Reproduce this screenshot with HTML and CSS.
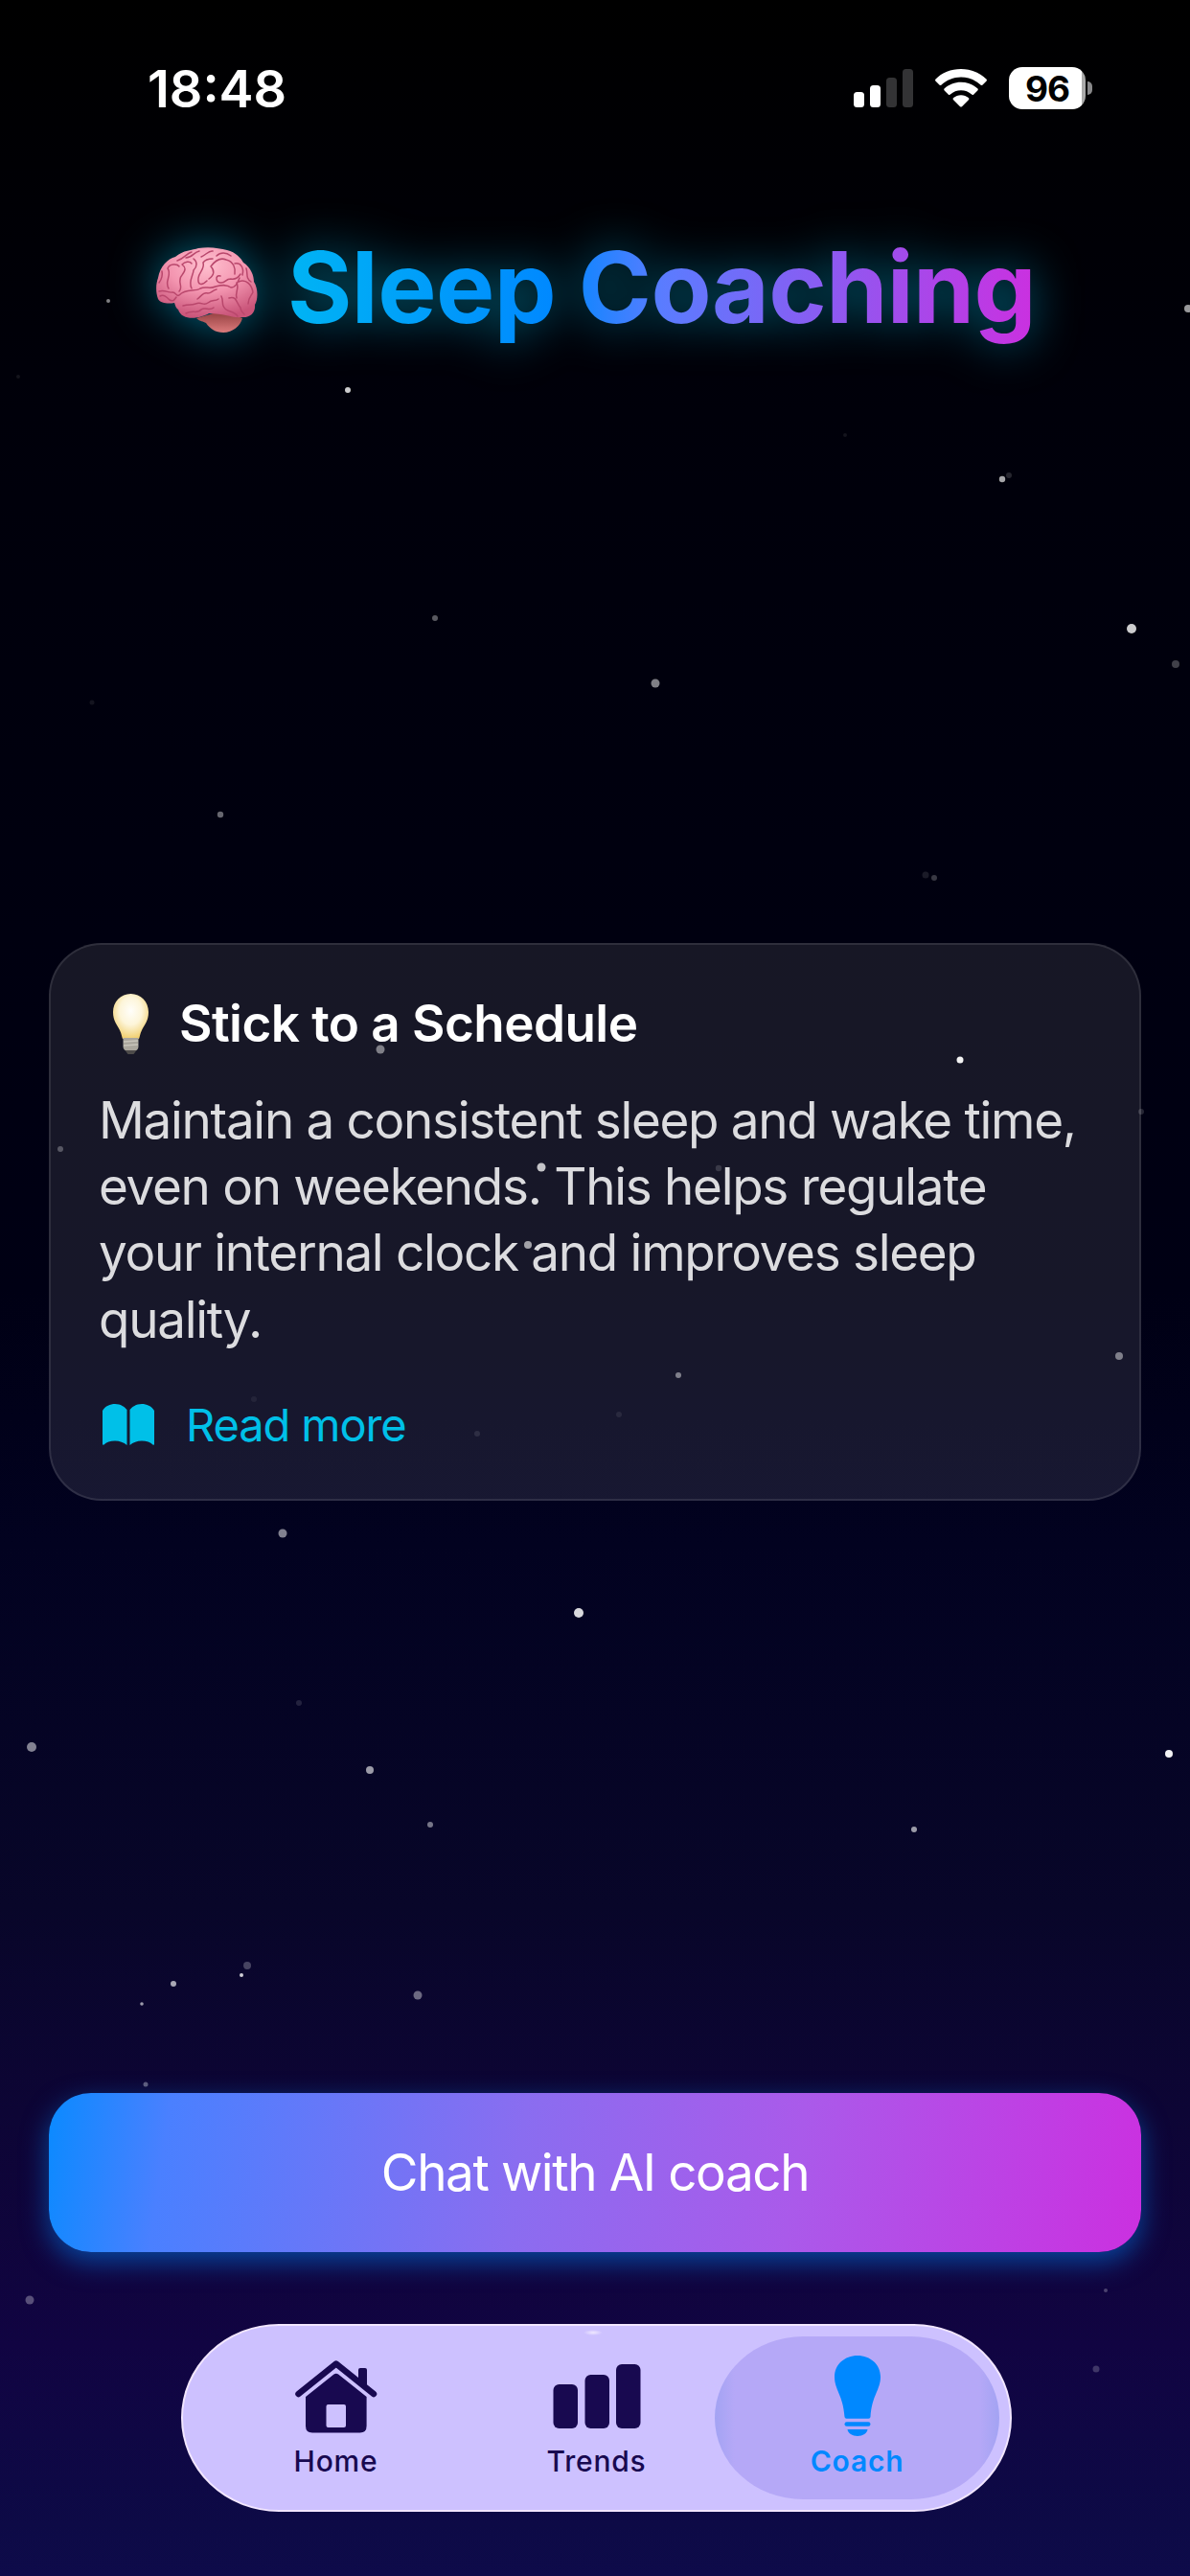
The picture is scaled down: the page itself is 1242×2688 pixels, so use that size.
FILE: index.html
```
<!DOCTYPE html>
<html lang="en">
<head>
    <meta charset="UTF-8">
    <title>Sleep Coaching</title>
    <link rel="stylesheet" href="styles.css">
</head>
<body>
    <div class="screen">
        <svg class="stars" viewBox="0 0 1242 2688" fill="#fff">
            <circle cx="113" cy="314" r="2" opacity=".5"/>
            <circle cx="1240" cy="322" r="4" opacity=".6"/>
            <circle cx="363" cy="407" r="3" opacity=".8"/>
            <circle cx="19" cy="393" r="2" opacity=".08"/>
            <circle cx="1046" cy="500" r="3.2" opacity=".65"/>
            <circle cx="1053" cy="496" r="3" opacity=".15"/>
            <circle cx="882" cy="454" r="2" opacity=".08"/>
            <circle cx="454" cy="645" r="3" opacity=".35"/>
            <circle cx="1181" cy="656" r="5" opacity=".8"/>
            <circle cx="684" cy="713" r="4.5" opacity=".5"/>
            <circle cx="1227" cy="693" r="4" opacity=".25"/>
            <circle cx="96" cy="733" r="2.5" opacity=".08"/>
            <circle cx="230" cy="850" r="3.2" opacity=".4"/>
            <circle cx="966" cy="913" r="3.5" opacity=".1"/>
            <circle cx="975" cy="916" r="3" opacity=".22"/>
            <circle cx="397" cy="1095" r="4.5" opacity=".45"/>
            <circle cx="63" cy="1199" r="3" opacity=".28"/>
            <circle cx="565" cy="1218" r="4.5" opacity=".75"/>
            <circle cx="551" cy="1299" r="4" opacity=".6"/>
            <circle cx="1002" cy="1106" r="3.5" opacity=".95"/>
            <circle cx="1191" cy="1160" r="3" opacity=".15"/>
            <circle cx="750" cy="1219" r="3.2" opacity=".15"/>
            <circle cx="1168" cy="1415" r="4" opacity=".45"/>
            <circle cx="708" cy="1435" r="3" opacity=".45"/>
            <circle cx="265" cy="1460" r="3" opacity=".06"/>
            <circle cx="646" cy="1476" r="3" opacity=".08"/>
            <circle cx="498" cy="1496" r="3" opacity=".1"/>
            <circle cx="295" cy="1600" r="4.5" opacity=".5"/>
            <circle cx="604" cy="1683" r="5" opacity=".85"/>
            <circle cx="312" cy="1777" r="3" opacity=".12"/>
            <circle cx="33" cy="1823" r="5" opacity=".5"/>
            <circle cx="386" cy="1847" r="4" opacity=".6"/>
            <circle cx="1220" cy="1830" r="4" opacity=".95"/>
            <circle cx="449" cy="1904" r="3" opacity=".45"/>
            <circle cx="954" cy="1909" r="3" opacity=".6"/>
            <circle cx="258" cy="2051" r="4" opacity=".25"/>
            <circle cx="252" cy="2061" r="2" opacity=".8"/>
            <circle cx="181" cy="2070" r="3" opacity=".65"/>
            <circle cx="148" cy="2091" r="1.8" opacity=".6"/>
            <circle cx="436" cy="2082" r="4.5" opacity=".4"/>
            <circle cx="152" cy="2175" r="2.5" opacity=".35"/>
            <circle cx="31" cy="2400" r="4.5" opacity=".3"/>
            <circle cx="1154" cy="2390" r="2" opacity=".25"/>
            <circle cx="1144" cy="2472" r="3.5" opacity=".2"/>
        </svg>

        <header class="status-bar">
            <span class="time">18:48</span>
            <div class="status-icons">
                <svg class="signal" viewBox="0 0 62 40" width="62" height="40">
                    <rect x="0" y="24" width="11" height="16" rx="3.5" fill="#fff"/>
                    <rect x="17" y="17" width="11" height="23" rx="3.5" fill="#fff"/>
                    <rect x="34" y="9" width="11" height="31" rx="3.5" fill="#333335"/>
                    <rect x="51" y="0" width="11" height="40" rx="3.5" fill="#333335"/>
                </svg>
                <svg class="wifi" viewBox="0 0 54 40" width="54" height="40" fill="#fff">
                    <path d="M27 0C16.500 0 7 4 .6 10.500c-.7.800-.7 1.500 0 2.200l3.800 3.800c.7.700 1.500.7 2.200 0C12 11.500 19 8.500 27 8.500s15 3 20.400 8c.7.700 1.500.7 2.200 0l3.800-3.800c.7-.7.7-1.400 0-2.200C47 4 37.500 0 27 0z"/>
                    <path d="M27 13.700c-6.600 0-12.600 2.500-17.200 6.500-.8.700-.8 1.500-.1 2.200l4 4c.7.700 1.400.7 2.200.1 3-2.700 6.900-4.200 11.100-4.200s8.100 1.500 11.100 4.200c.8.600 1.500.6 2.200-.1l4-4c.7-.7.7-1.500-.1-2.200-4.600-4-10.600-6.500-17.200-6.500z"/>
                    <path d="M27 27.200c-3 0-5.700 1.100-7.800 2.800-.8.700-.8 1.500-.1 2.200l6.700 6.700c.8.800 1.600.8 2.400 0l6.700-6.700c.7-.7.700-1.500-.1-2.200-2.100-1.700-4.800-2.800-7.800-2.800z"/>
                </svg>
                <div class="battery"><span class="battery-level">96</span></div>
            </div>
        </header>

        <h1 class="title">
            <svg class="brain" viewBox="0 0 106 90" width="106" height="90">
                <defs>
                    <radialGradient id="brainFill" cx=".5" cy=".25" r=".75">
                        <stop offset="0" stop-color="#ffc0cf"/>
                        <stop offset=".5" stop-color="#f395b0"/>
                        <stop offset="1" stop-color="#c95479"/>
                    </radialGradient>
                    <linearGradient id="stemFill" x1="0" y1="0" x2="0" y2="1">
                        <stop offset="0" stop-color="#8f3b3c"/>
                        <stop offset="1" stop-color="#dc7b7c"/>
                    </linearGradient>
                </defs>
                <path fill="url(#stemFill)" d="M42 74c4 4 7 3 10 5 4 6 10 10 18 10 10 0 18-7 20-15l-20-8z"/>
                <path fill="url(#brainFill)" d="M2 54C-1 46 0 37 2 32 4 20 12 12 20 10 28 3 38 3 44 1 56-1 66 1 74 3c9 2 15 9 17 13 8 5 11 14 11 20 5 8 4 19 1 24 1 8-5 14-14 13-10 1-18-4-34-4-8 5-28 9-32-4-3-2-3-5-4-7C13 59 5 59 2 54z"/>
                <g fill="none" stroke="#b9476c" stroke-width="1.500" stroke-linecap="round" stroke-linejoin="round">
                    <path d="M3 46c6-2 10 2 14 1 4 0 4 5 7 3 7-8 17-3 22-7 6-3 9 1 16-2 8-2 12-2 16 1 5 0 7-5 9-10"/>
                    <path d="M3 37c3-4 4-7 3-12M13 43c-5-8 4-13-1-21 2-5 10-5 12-2M24 46c5-5-3-10 3-17 4-5 4-8 0-11 3-3 8-4 10-1M37 43c-4-7 2-14 2-19 4-4 4-9 0-12M53 35c-5 5-10 5-9-3 1-7 7-9 5-16 2-3 6-4 10-4M55 33c6-4 6-9 2-13 3-4 9-10 16-7 8 2 10 9 9 15M67 30c-6-2-5 8 1 7 5 0 4-4 10-4 5 1 8-2 10-5"/>
                    <path d="M22 14c7-2 10-8 15-9M31 11c7 0 8-6 14-7M47 10c5-2 8-7 12-6M63 9c4-4 10-4 15 0M82 17c6-1 10 4 8 12M94 22c2 6-1 10 5 14M84 37c3 6-2 10 0 16M86 36c8-4 14 4 15 11-2 4-5 6-5 12"/>
                    <path d="M28 61c7-2 8 0 13-2 7-3 8 3 13-1 5-4 7-1 11-4M31 69c7-4 12 1 16-4 5-3 8 2 13-2M68 51c3 6-1 10 5 14 4 3 9 2 12 7M76 53c8-3 8 6 12 10 0 3 2 5 4 7M43 54c5-4 6-7 11-6 4 0 4-3 9-4M4 51c4-2 7 1 10 4 4 2 5 0 7-3"/>
                </g>
            </svg>
            <span class="title-text">Sleep Coaching</span>
        </h1>

        <main class="content">
            <section class="card">
                <h2 class="card-title">
                    <svg class="bulb" viewBox="0 0 37 63" width="37" height="63">
                        <defs>
                            <radialGradient id="bulbFill" cx=".5" cy=".38" r=".62">
                                <stop offset="0" stop-color="#fffefa"/>
                                <stop offset=".5" stop-color="#fdf5d9"/>
                                <stop offset="1" stop-color="#f1cf70"/>
                            </radialGradient>
                        </defs>
                        <path fill="url(#bulbFill)" d="M18.500 0C8 0 0 8.500 0 19c0 9 4 13 7 19 2 4 2 7 3 9h17c1-2 1-5 3-9 3-6 7-10 7-19C37 8.500 29 0 18.500 0z"/>
                        <path fill="#aaa69d" d="M10.500 46h16v9c0 2-1 3-2 4h-12c-1-1-2-2-2-4z"/>
                        <path stroke="#c9c5bc" stroke-width="1.500" d="M11 50l15-1M11 54l15-1"/>
                        <path fill="#4d4b4a" d="M12.500 59h12l-3 4h-6z"/>
                    </svg>
                    <span>Stick to a Schedule</span>
                </h2>
                <p class="card-text">
                    <span class="line">Maintain a consistent sleep and wake time,</span>
                    <span class="line">even on weekends. This helps regulate</span>
                    <span class="line">your internal clock and improves sleep</span>
                    <span class="line">quality.</span>
                </p>
                <a class="read-more">
                    <svg viewBox="0 0 54 43" width="54" height="43" fill="#00c0e8">
                        <path d="M0 7C3 2 8 0 13 0c6 0 10 3 12.500 6v37C22 40 18 38.500 13 38.500S4 40 1.500 42.500C.6 43.300 0 42.500 0 42z"/>
                        <path d="M54 7c-3-5-8-7-13-7-6 0-10 3-12.500 6v37C32 40 36 38.500 41 38.500s9 1.500 11.500 4c.9.800 1.500 0 1.500-.5z"/>
                    </svg>
                    <span>Read more</span>
                </a>
            </section>
        </main>

        <button class="chat-button"><span>Chat with AI coach</span></button>

        <nav class="tab-bar">
            <a class="tab">
                <svg viewBox="0 0 86 84" width="86" height="84" fill="#180950">
                    <path fill="none" stroke="#180950" stroke-width="6.500" stroke-linecap="round" stroke-linejoin="round" d="M3.500 40L42.800 8.500 82 40"/>
                    <path d="M66 15q0-2 2-2h5q2 0 2 2v20l-9-7z"/>
                    <path fill-rule="evenodd" d="M11 43L40.500 19.500q2.300-1.600 4.600 0L74.600 43v30.500q0 7-7 7H18q-7 0-7-7zM34.500 51q-2 0-2 2v20q0 2 2 2h16.500q2 0 2-2V53q0-2-2-2z"/>
                </svg>
                <span>Home</span>
            </a>
            <a class="tab tab-trends">
                <svg viewBox="0 0 92 84" width="92" height="84" fill="#180950">
                    <rect x="0.500" y="30" width="25.500" height="46" rx="6"/>
                    <rect x="33.500" y="20" width="25.500" height="56" rx="6"/>
                    <rect x="66" y="9" width="25.500" height="67" rx="6"/>
                </svg>
                <span>Trends</span>
            </a>
            <a class="tab tab-active">
                <svg viewBox="0 0 48 84" width="48" height="84" fill="#0088ff">
                    <path d="M24 0C10.500 0 0 9.500 0 22c0 14 9 19 10.500 42q.2 1.700 2 1.700h23q1.800 0 2-1.700C39 41 48 36 48 22 48 9.500 37.500 0 24 0z"/>
                    <rect x="10.500" y="69.300" width="27" height="4.400" rx="2.200"/>
                    <path d="M13.500 77h21c-.5 4-5 7-10.500 7s-10-3-10.500-7z"/>
                </svg>
                <span>Coach</span>
            </a>
        </nav>
    </div>
</body>
</html>
```
FILE: styles.css
```
body {
    margin: 0;
    background: #000;
    font-family: Inter, "Liberation Sans", sans-serif;
    color: #fff;
}

.screen {
    position: relative;
    box-sizing: border-box;
    width: 1242px;
    height: 2688px;
    padding: 0 51px;
    display: flex;
    flex-direction: column;
    overflow: hidden;
    background: linear-gradient(#000 0, #00000a 16%, #000014 50%, #020220 60%, #080629 74%, #0d0535 82%, #110442 91%, #0d0a46 98%, #0e0b4a 100%);
}

/* stars lie behind and between the content */
.stars {
    position: absolute;
    left: 0;
    top: 0;
    width: 1242px;
    height: 2688px;
}

.status-bar {
    display: flex;
    justify-content: space-between;
    align-items: center;
    height: 184px;
    padding: 0 58px 0 103px;
}

.time {
    font-size: 54px;
    font-weight: 600;
}

.status-icons {
    display: flex;
    align-items: center;
    gap: 23px;
}

.battery {
    position: relative;
    width: 80px;
    height: 44px;
    border-radius: 14px;
    background: linear-gradient(90deg, #fff 76px, #aaa 76px);
    color: #000;
    display: flex;
    justify-content: center;
    align-items: center;
}

.battery::after {
    content: "";
    position: absolute;
    right: -7px;
    top: 15px;
    width: 5px;
    height: 14px;
    border-radius: 0 6px 6px 0;
    background: #88888a;
}

.battery-level {
    font-size: 37px;
    font-weight: 700;
    letter-spacing: -1px;
}

.title {
    display: flex;
    align-items: center;
    gap: 31px;
    height: 120px;
    margin: 59px 0 0 112px;
    filter: drop-shadow(0 0 24px rgba(0, 192, 232, 0.55));
}

.title-text {
    margin-top: -6px;
    font-size: 103px;
    font-weight: 700;
    line-height: 120px;
    letter-spacing: -0.6px;
    white-space: nowrap;
    color: transparent;
    background: linear-gradient(90deg, #00b4f4 0, #0088ff 36%, #5a7cff 50%, #cb30e0 100%);
    background-clip: text;
    -webkit-background-clip: text;
}

.content {
    position: relative;
    margin-top: 621px;
}

.card {
    box-sizing: border-box;
    height: 582px;
    padding: 49px 51px;
    border: 2px solid rgba(255, 255, 255, 0.1);
    border-radius: 55px;
    background: rgba(255, 255, 255, 0.09);
}

.card-title {
    display: flex;
    align-items: center;
    gap: 32px;
    height: 66px;
    margin: 0;
    padding-left: 14px;
    font-size: 53px;
    font-weight: 600;
    letter-spacing: -0.55px;
}

.card-text {
    margin: 34px 0 0;
    font-size: 53px;
    line-height: 69.2px;
    letter-spacing: -1.3px;
    color: #dcdcdf;
}

.line {
    display: block;
    white-space: nowrap;
    margin-left: -1px;
}

.read-more {
    display: flex;
    align-items: center;
    gap: 33px;
    height: 60px;
    margin-top: 45px;
    padding-left: 3px;
    font-size: 47px;
    letter-spacing: -1.1px;
    color: #00c0e8;
}

.chat-button {
    position: relative;
    height: 166px;
    margin-top: 618px;
    border: 0;
    border-radius: 44px;
    background: linear-gradient(98deg, #0a8aff 0, #4a80ff 11%, #8a6df0 43%, #aa5aea 68%, #cb30e0 100%);
    box-shadow: 0 10px 28px rgba(0, 136, 255, 0.5);
    color: #fff;
    font-family: inherit;
    font-size: 53px;
    letter-spacing: -1.4px;
}

.tab-bar {
    position: relative;
    box-sizing: border-box;
    display: flex;
    width: 867px;
    height: 196px;
    margin: 75px 0 0 138px;
    padding: 11px;
    border: 2px solid #f2e6ff;
    border-radius: 102px / 98px;
    background: #cdc1ff;
}

/* specular spot on the top edge */
.tab-bar::before {
    content: "";
    position: absolute;
    left: 418px;
    top: 4px;
    width: 20px;
    height: 6px;
    border-radius: 50%;
    background: radial-gradient(closest-side, #efe8ff, #cdc1ff);
}

.tab {
    display: flex;
    flex-direction: column;
    align-items: center;
    box-sizing: border-box;
    width: 297px;
    height: 170px;
    padding-top: 20px;
    gap: 8px;
    flex: none;
    font-size: 30px;
    font-weight: 500;
    line-height: 36px;
    letter-spacing: 0.8px;
    color: #180950;
}

.tab-trends {
    margin: 0 -25px;
}

.tab-active {
    border-radius: 92px / 85px;
    background: linear-gradient(90deg, #a3a3f3 0, #b5a8f7 7%, #b5a8f7 93%, #a3a3f3 100%);
    font-weight: 600;
    color: #0088ff;
}
```
